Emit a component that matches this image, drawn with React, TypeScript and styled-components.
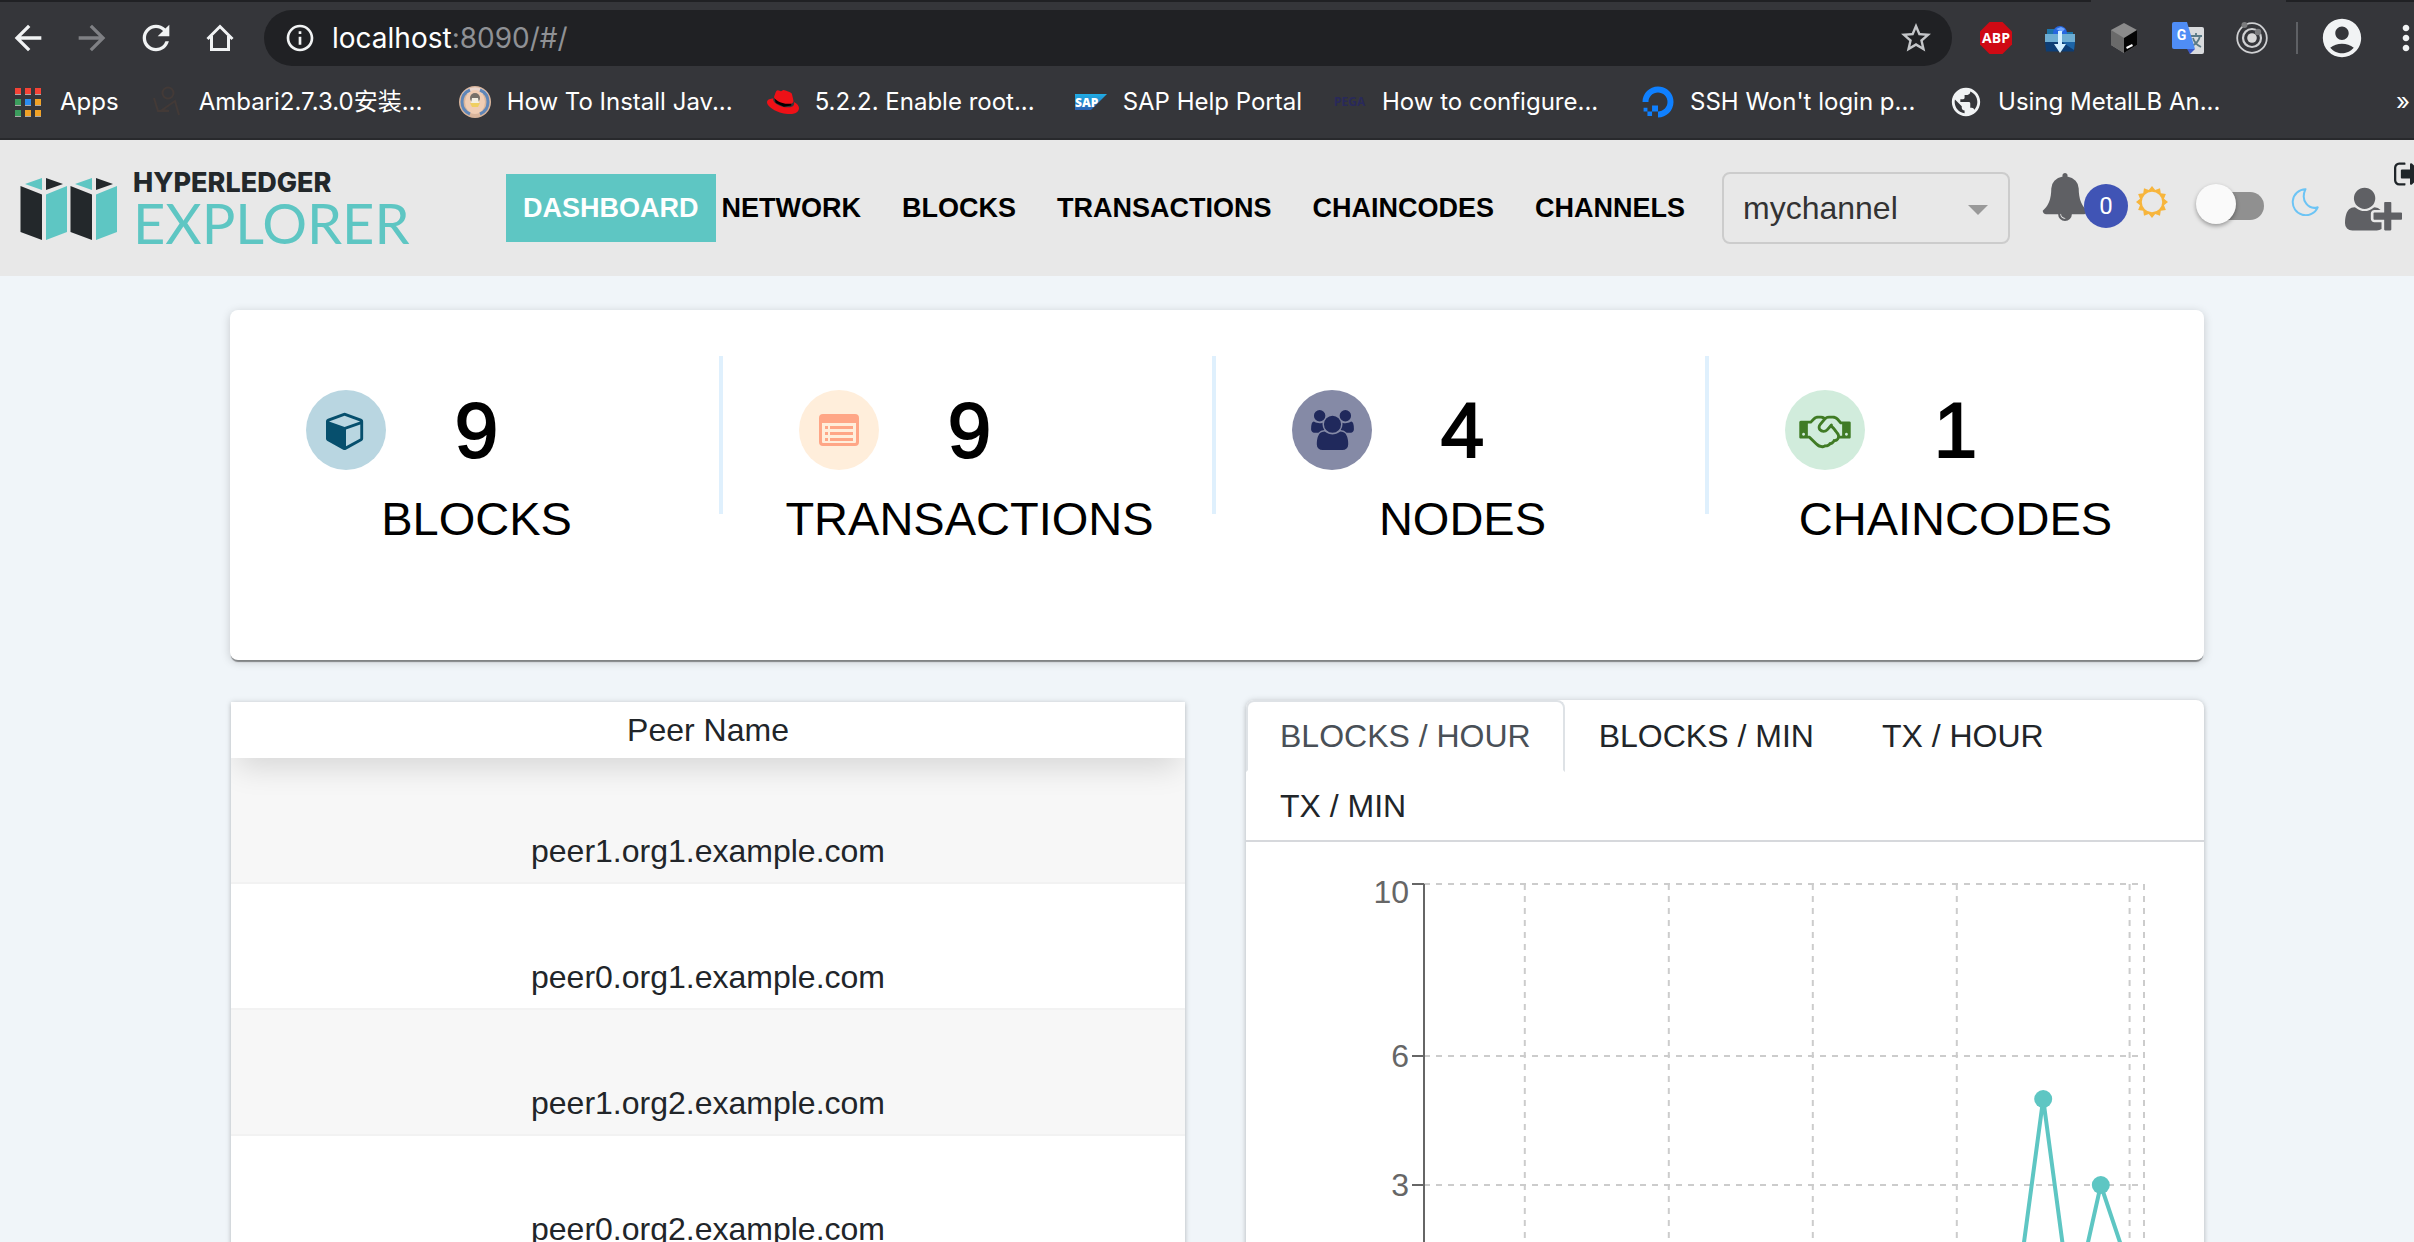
import React, { useState } from "react";
import styled, { createGlobalStyle } from "styled-components";
import {
  MdAccountCircle,
  MdArrowBack,
  MdArrowForward,
  MdInfoOutline,
  MdMoreVert,
  MdPublic,
  MdRefresh,
  MdStarBorder,
} from "react-icons/md";
import { FaDigitalOcean, FaRedhat } from "react-icons/fa";

const teal = "#5ec6c3";
const ink = "#212529";
const chrome = "#35363a";
const chromeDark = "#202124";
const uiFont = `Inter, "Noto Sans CJK SC", sans-serif`;

const GlobalStyle = createGlobalStyle`
  * { box-sizing: border-box; }
  html, body { margin: 0; height: 100%; overflow: hidden; }
  body {
    background: #f0f5f9;
    color: ${ink};
    font-family: "Liberation Sans", Arial, sans-serif;
    font-size: 32px;
  }
  button { font: inherit; color: inherit; background: none; border: 0; padding: 0; cursor: pointer; }
  a { color: inherit; text-decoration: none; }
  svg { display: block; flex: none; }
`;

const Page = styled.div`
  height: 100vh;
  display: flex;
  flex-direction: column;
  overflow: hidden;
`;

/* ---------- browser frame ---------- */

const Browser = styled.div`
  flex: none;
  background: ${chrome};
  border-bottom: 2px solid #28292c;
  font-family: ${uiFont};
  color: #fff;
`;

const TabStrip = styled.div`
  display: flex;
  justify-content: space-between;
  height: 2px;
`;

const TabEdge = styled.div<{ $basis: string }>`
  flex: 0 0 ${(p) => p.$basis};
  background: ${chromeDark};
`;

const Toolbar = styled.div`
  display: flex;
  align-items: center;
  height: 72px;
  padding: 0 0 0 8px;
  overflow: hidden;
`;

const NavButtons = styled.div`
  display: flex;
  gap: 24px;
  width: 256px;
`;

const IconButton = styled.button<{ $color?: string; $width?: number }>`
  display: flex;
  align-items: center;
  justify-content: center;
  flex: none;
  width: ${(p) => p.$width ?? 40}px;
  height: 40px;
  color: ${(p) => p.$color ?? "#f1f3f4"};
`;

const AddressBar = styled.div`
  flex: 1;
  display: flex;
  align-items: center;
  height: 56px;
  padding: 0 16px 0 20px;
  border-radius: 28px;
  background: ${chromeDark};
`;

const Address = styled.div`
  flex: 1;
  padding-left: 16px;
  font-size: 28px;
  line-height: 36px;
  color: #fff;
`;

const Muted = styled.span`
  color: #8f9195;
`;

const Extensions = styled.div`
  display: flex;
  align-items: center;
  gap: 32px;
  padding-left: 28px;
`;

const Separator = styled.div`
  width: 2px;
  height: 32px;
  margin: 0 21px 0 28px;
  background: #5f6165;
`;

const MenuSlot = styled.div`
  display: flex;
  align-items: center;
  gap: 33px;
`;

const BookmarkBar = styled.div`
  display: flex;
  align-items: center;
  gap: 32px;
  height: 64px;
  padding: 0 4px 8px 12px;
`;

const Bookmark = styled.a<{ $long?: boolean }>`
  display: flex;
  align-items: center;
  gap: 16px;
  flex: none;
  width: ${(p) => (p.$long ? "276px" : "auto")};
  font-size: 24px;
  line-height: 32px;
  white-space: nowrap;
`;

const Favicon = styled.span`
  display: flex;
  align-items: center;
  justify-content: center;
  flex: none;
  width: 32px;
  height: 32px;
`;

const AppsGrid = styled.span`
  display: grid;
  grid-template-columns: repeat(3, 6px);
  gap: 4px;
`;

const AppsCell = styled.span<{ $color: string }>`
  height: 7px;
  background: ${(p) => p.$color};
  border-bottom: 1px solid #a9a9a9;
`;

const Overflow = styled.button`
  margin-left: auto;
  font-size: 24px;
  line-height: 32px;
`;

/* ---------- explorer header ---------- */

const Header = styled.header`
  flex: none;
  display: flex;
  align-items: center;
  height: 136px;
  padding-left: 20px;
  background: #e8e8e8;
  overflow: hidden;
`;

const Logo = styled.a`
  display: flex;
  align-items: center;
  gap: 13px;
  flex: none;
  width: 486px;
`;

const LogoText = styled.span`
  display: flex;
  flex-direction: column;
`;

const LogoTop = styled.span`
  font-family: Inter, sans-serif;
  font-size: 27px;
  font-weight: 800;
  line-height: 30px;
  color: #23282b;
`;

const LogoBottom = styled.span`
  font-family: Lato, sans-serif;
  font-size: 56px;
  line-height: 50px;
  color: ${teal};
`;

const MainNav = styled.nav`
  display: flex;
  align-items: center;
  gap: 41px;
  flex: none;
`;

const NavLink = styled.a<{ $active?: boolean }>`
  font-size: 27px;
  font-weight: 700;
  line-height: 36px;
  color: ${(p) => (p.$active ? "#fff" : "#000")};
  background: ${(p) => (p.$active ? teal : "none")};
  padding: ${(p) => (p.$active ? "16px 17px" : "0")};
  margin-right: ${(p) => (p.$active ? "-35px" : "0")};
`;

const SelectWrap = styled.label`
  display: grid;
  align-items: center;
  flex: none;
  margin-left: 37px;
`;

const ChannelSelect = styled.select`
  grid-area: 1 / 1;
  appearance: none;
  width: 288px;
  height: 72px;
  padding: 0 56px 0 19px;
  border: 2px solid #ccc;
  border-radius: 8px;
  background: transparent;
  color: #333;
  font: 32px "Liberation Sans", Arial, sans-serif;
`;

const Caret = styled.span`
  grid-area: 1 / 1;
  justify-self: end;
  margin-right: 22px;
  margin-top: 4px;
  border: 10px solid transparent;
  border-top-color: #999;
  border-bottom: 0;
  pointer-events: none;
`;

const Tools = styled.div`
  display: flex;
  align-items: center;
  align-self: stretch;
  flex: none;
  padding: 0 0 8px 31px;
`;

const BellButton = styled.button`
  display: flex;
  align-items: center;
  color: #5f6064;
`;

const BellGlyph = styled.span`
  margin-bottom: 14px;
`;

const Badge = styled.span`
  margin-left: -5px;
  margin-top: 4px;
  z-index: 1;
  width: 44px;
  height: 44px;
  border-radius: 50%;
  background: #4054b5;
  color: #fff;
  font: 24px/44px Roboto, sans-serif;
  text-align: center;
`;

const ThemeRow = styled.label`
  display: flex;
  align-items: center;
  margin: 0 0 4px 8px;
`;

const Toggle = styled.input`
  appearance: none;
  position: relative;
  width: 68px;
  height: 40px;
  margin: 4px 27px 0 28px;
  cursor: pointer;

  &::before {
    content: "";
    position: absolute;
    inset: 8px 0 4px 4px;
    border-radius: 14px;
    background: #909090;
  }
  &::after {
    content: "";
    position: absolute;
    top: 0;
    left: 0;
    width: 40px;
    height: 40px;
    border-radius: 50%;
    background: #fafafa;
    box-shadow: 0 2px 4px rgba(0, 0, 0, 0.35);
  }
  &:checked::after {
    left: 28px;
  }
`;

const UserButton = styled.button`
  margin: 10px 0 0 26px;
  color: #5f6064;
`;

const LogoutButton = styled.button`
  align-self: flex-start;
  margin: 18px 0 0 -8px;
  color: #1f2529;
`;

/* ---------- dashboard ---------- */

const Main = styled.main`
  flex: none;
  padding: 34px 210px 40px 230px;
  display: flex;
  flex-direction: column;
  gap: 40px;
`;

const cardShadow = "0 0 6px rgba(0, 0, 0, 0.14), 0 2px 4px rgba(0, 0, 0, 0.14)";

const StatsCard = styled.section`
  display: grid;
  grid-template-columns: repeat(4, 1fr);
  min-height: 350px;
  padding: 46px 2px 0 0;
  border-radius: 8px;
  background: #fff;
  box-shadow: 0 3px 1px -1px rgba(0, 0, 0, 0.4), 0 2px 10px rgba(0, 0, 0, 0.18);
`;

const Stat = styled.div`
  display: flex;
  align-items: flex-start;
`;

const StatBody = styled.div`
  flex: 1;
  padding: 34px 0 0 4px;
`;

const StatRow = styled.div`
  display: grid;
  grid-template-columns: 1fr auto 1fr;
  align-items: center;
  height: 80px;
  margin-bottom: 21px;
`;

const StatIcon = styled.span<{ $bg: string; $fg: string }>`
  display: flex;
  align-items: center;
  justify-content: center;
  width: 80px;
  height: 80px;
  margin-left: 72px;
  border-radius: 50%;
  background: ${(p) => p.$bg};
  color: ${(p) => p.$fg};
`;

const StatNumber = styled.span`
  font-size: 78px;
  line-height: 80px;
  color: #000;
  -webkit-text-stroke: 2px #000;
`;

const StatLabel = styled.h2`
  margin: 0;
  font-size: 47px;
  font-weight: 400;
  line-height: 56px;
  text-align: center;
  color: #000;
`;

const StatDivider = styled.div<{ $hidden: boolean }>`
  width: 4px;
  height: 158px;
  background: ${(p) => (p.$hidden ? "transparent" : "#dff0fd")};
`;

const Columns = styled.div`
  display: grid;
  grid-template-columns: 955fr 958fr;
  align-items: start;
  gap: 61px;
`;

const PeerPanel = styled.section`
  padding: 2px 0 0 1px;
`;

const PeerTable = styled.table`
  width: 100%;
  border-collapse: separate;
  border-spacing: 0;
  background: #fff;
  box-shadow: ${cardShadow};
  text-align: center;
`;

const PeerHead = styled.th`
  position: relative;
  height: 56px;
  padding: 0;
  background: #fff;
  font-weight: 400;
  line-height: 36px;
  box-shadow: 0 16px 30px -6px rgba(0, 0, 0, 0.13);
  clip-path: inset(0 0 -48px 0);
`;

const PeerRow = styled.tr`
  &:nth-child(odd) {
    background: #f7f7f7;
  }
`;

const PeerCell = styled.td`
  height: 126px;
  padding: 0 0 13px;
  border-bottom: 2px solid #f2f2f2;
  line-height: 36px;
  vertical-align: bottom;
`;

const ChartCard = styled.section`
  border-radius: 8px;
  background: #fff;
  box-shadow: ${cardShadow};
`;

const Tabs = styled.div`
  display: flex;
  flex-wrap: wrap;
  border-bottom: 2px solid #d6d8dc;
`;

const Tab = styled.button<{ $active: boolean; $last: boolean }>`
  padding: 16px 32px;
  line-height: 36px;
  margin-bottom: -2px;
  border: 2px solid transparent;
  border-radius: 8px 8px 0 0;
  ${(p) =>
    p.$active &&
    `
    color: #495057;
    border-color: #dee2e6 #dee2e6 ${p.$last ? "#fff" : "transparent"};
  `}
`;

const ChartArea = styled.div`
  padding-top: 16px;
`;

const ChartSvg = styled.svg`
  width: 100%;
  height: auto;
  font-family: "Liberation Sans", Arial, sans-serif;
`;

/* ---------- icons ---------- */

const Glyph = ({ d, box, width, height }: { d: string; box: string; width: number; height: number }) => (
  <svg viewBox={box} width={width} height={height} fill="currentColor" aria-hidden="true">
    <path d={d} />
  </svg>
);

const cubePath =
  "M896 1629l640-349v-636l-640 233v752zm-64-865l698-254-698-254-698 254zm832-252v768q0 35-18 65t-49 47l-704 384q-28 16-61 16t-61-16l-704-384q-31-17-49-47t-18-65v-768q0-40 23-73t61-47l704-256q22-8 44-8t44 8l704 256q38 14 61 47t23 73z";
const usersPath =
  "M593 896q-162 5-265 128h-134q-82 0-138-40.5t-56-118.5q0-353 124-353 6 0 43.5 21t97.5 42.5 119 21.5q67 0 133-23-5 37-5 66 0 139 81 256zm1071 637q0 120-73 189.5t-194 69.5h-874q-121 0-194-69.5t-73-189.5q0-53 3.5-103.5t14-109 26.5-108.5 43-97.5 62-81 85.5-53.5 111.5-20q10 0 43 21.5t73 48 107 48 135 21.5 135-21.5 107-48 73-48 43-21.5q61 0 111.5 20t85.5 53.5 62 81 43 97.5 26.5 108.5 14 109 3.5 103.5zm-1024-1277q0 106-75 181t-181 75-181-75-75-181 75-181 181-75 181 75 75 181zm704 384q0 159-112.5 271.5t-271.5 112.5-271.5-112.5-112.5-271.5 112.5-271.5 271.5-112.5 271.5 112.5 112.5 271.5zm576 225q0 78-56 118.5t-138 40.5h-134q-103-123-265-128 81-117 81-256 0-29-5-66 66 23 133 23 59 0 119-21.5t97.5-42.5 43.5-21q124 0 124 353zm-128-609q0 106-75 181t-181 75-181-75-75-181 75-181 181-75 181 75 75 181z";
const handshakePath =
  "M192 1152q40 0 56-32t0-64-56-32-56 32 0 64 56 32zm1473-58q-10-13-38.5-50t-41.5-54-38-49-42.5-53-40.5-47-45-49l-125 140q-83 94-208.5 92t-205.5-98q-57-69-56.5-158t58.5-157l177-206q-22-11-51-16.5t-47.5-6-56.5.5-49 1q-92 0-158 66l-158 158h-155v544q5 0 21-.5t22 0 19.5 2 20.5 4.5 17.5 8.5 18.5 13.5l297 292q115 111 227 111 78 0 125-47 57 20 112.5-8t72.5-85q74 6 127-44 20-18 36-45.5t14-50.5q10 10 43 10 43 0 77-21t49.5-53 12-71.5-30.5-73.5zm159 58h96v-512h-93l-157-180q-66-76-169-76h-167q-89 0-146 67l-209 243q-28 33-28 75t27 75q43 51 110 52t111-49l193-218q25-23 53.5-21.5t47 27 8.5 56.5q16 19 56 63t60 68q29 36 82.5 105.5t64.5 84.5q52 66 60 140zm288 0q40 0 56-32t0-64-56-32-56 32 0 64 56 32zm192-576v640q0 26-19 45t-45 19h-434q-27 65-82 106.5t-125 51.5q-33 48-80.5 81.5t-102.5 45.5q-42 53-104.5 81.5t-128.5 24.5q-60 34-126 39.5t-127.5-14-117-53.5-103.5-81l-287-282h-358q-26 0-45-19t-19-45v-672q0-26 19-45t45-19h421q14-14 47-48t47.5-48 44-40 50.5-37.5 51-25.5 62-19.5 68-5.5h117q99 0 181 56 82-56 181-56h167q35 0 67 6t56.5 14.5 51.5 26.5 44.5 31 43 39.5 39 42 41 48 41.5 48.5h355q26 0 45 19t19 45z";
const bellPath =
  "M912 1696q0-16-16-16-59 0-101.5-42.5t-42.5-101.5q0-16-16-16t-16 16q0 73 51.5 124.5t124.5 51.5q16 0 16-16zm816-288q0 52-38 90t-90 38h-448q0 106-75 181t-181 75-181-75-75-181h-448q-52 0-90-38t-38-90q50-42 91-88t85-119.5 74.5-158.5 50-206 19.5-260q0-152 117-282.5t307-158.5q-8-19-8-39 0-40 28-68t68-28 68 28 28 68q0 20-8 39 190 28 307 158.5t117 282.5q0 139 19.5 260t50 206 74.5 158.5 85 119.5 91 88z";
const userPlusPath =
  "M704 896q-159 0-271.5-112.5t-112.5-271.5 112.5-271.5 271.5-112.5 271.5 112.5 112.5 271.5-112.5 271.5-271.5 112.5zm960 128h352q13 0 22.5 9.5t9.5 22.5v192q0 13-9.5 22.5t-22.5 9.5h-352v352q0 13-9.5 22.5t-22.5 9.5h-192q-13 0-22.5-9.5t-9.5-22.5v-352h-352q-13 0-22.5-9.5t-9.5-22.5v-192q0-13 9.5-22.5t22.5-9.5h352v-352q0-13 9.5-22.5t22.5-9.5h192q13 0 22.5 9.5t9.5 22.5v352zm-736 224q0 52 38 90t90 38h256v238q-68 50-171 50h-874q-121 0-194-69t-73-190q0-53 3.5-103.5t14-109 26.5-108.5 43-97.5 62-81 85.5-53.5 111.5-20q19 0 39 17 79 61 154.5 91.5t164.5 30.5 164.5-30.5 154.5-91.5q20-17 39-17 132 0 217 96h-223q-52 0-90 38t-38 90v192z";
const signOutPath =
  "M640 1440q0 4 1 20t.5 26.5-3 23.5-10 19.5-20.5 6.5h-320q-119 0-203.5-84.5t-84.5-203.5v-704q0-119 84.5-203.5t203.5-84.5h320q13 0 22.5 9.5t9.5 22.5q0 4 1 20t.5 26.5-3 23.5-10 19.5-20.5 6.5h-320q-66 0-113 47t-47 113v704q0 66 47 113t113 47h312l11.5 1 11.5 3 8 5.5 7 9 2 13.5zm928-544q0 26-19 45l-544 544q-19 19-45 19t-45-19-19-45v-288h-448q-26 0-45-19t-19-45v-384q0-26 19-45t45-19h448v-288q0-26 19-45t45-19 45 19l544 544q19 19 19 45z";

const ListIcon = () => (
  <svg viewBox="0 0 40 34" width="40" height="34" fill="currentColor" aria-hidden="true">
    <path
      fillRule="evenodd"
      d="M4 1h32a4 4 0 0 1 4 4v24a4 4 0 0 1-4 4H4a4 4 0 0 1-4-4V5a4 4 0 0 1 4-4zM3 10v19a1 1 0 0 0 1 1h32a1 1 0 0 0 1-1V10z"
    />
    <path d="M6 13h3v3H6zM11 13h23v3H11zM6 19h3v3H6zM11 19h23v3H11zM6 25h3v3H6zM11 25h23v3H11z" />
  </svg>
);

const HomeIcon = () => (
  <svg viewBox="0 0 32 32" width="32" height="32" fill="none" stroke="currentColor" strokeWidth="3" aria-hidden="true">
    <path d="M3.500 17 16 4.500 28.500 17M7.500 14v13.500h17V14" />
  </svg>
);

const SunIcon = () => {
  const points = Array.from({ length: 24 }, (_, i) => {
    const r = i % 2 ? 12.4 : 16;
    const a = (i * Math.PI) / 12 - Math.PI / 2;
    return `${16 + r * Math.cos(a)},${16 + r * Math.sin(a)}`;
  }).join("L");
  return (
    <svg viewBox="0 0 32 32" width="32" height="32" fill="#f7b53c" aria-hidden="true">
      <path fillRule="evenodd" d={`M${points}ZM16 5.800a10.200 10.200 0 1 0 0 20.400 10.200 10.200 0 0 0 0-20.400z`} />
    </svg>
  );
};

const MoonIcon = () => (
  <svg viewBox="0 0 28 28" width="28" height="28" fill="none" stroke="#6cc4f5" strokeWidth="2" strokeLinejoin="round" aria-hidden="true">
    <path d="M14.500 1.200A13 13 0 1 0 26.700 19.300C18 22 9 13 14.500 1.200z" />
  </svg>
);

const LogoMark = () => (
  <svg viewBox="0 0 100 66" width="100" height="66" aria-hidden="true">
    {[0, 50].map((x) => (
      <g key={x} transform={`translate(${x} 0)`}>
        <path fill="#23282b" d="M.500 11 22 19.500V65L.500 57zM26 3l17 6-17 6z" />
        <path fill={teal} d="M26 19.500 47 11v46l-21 8zM22 3v12L5 9z" />
      </g>
    ))}
  </svg>
);

const AbpIcon = () => (
  <svg viewBox="0 0 32 32" width="32" height="32" aria-hidden="true">
    <path fill="#cf0a14" d="M9.500 0h13L32 9.500v13L22.500 32h-13L0 22.500v-13z" />
    <text x="16" y="21" textAnchor="middle" fill="#fff" fontFamily="Open Sans, sans-serif" fontWeight="700" fontSize="14">
      ABP
    </text>
  </svg>
);

const FolderIcon = () => (
  <svg viewBox="0 0 32 32" width="32" height="32" aria-hidden="true">
    <path fill="#1c74a8" d="M3 7h7l2 3h17v8H3z" />
    <circle cx="16" cy="11" r="7" fill="#2667e0" />
    <path fill="#6fa4ff" d="M12 7l5-2 4 2-3 3z" />
    <path fill="#6eaed3" d="M1 12h30v8H1z" />
    <path fill="#0d3d74" d="M1 20h30l-1 9.500H2z" />
    <path fill="#1d64a6" d="M18 20h13l-1 8z" />
    <path fill="#d3efff" d="M14 9h4v13h4l-6 9-6-9h4z" />
  </svg>
);

const CubeIcon = () => (
  <svg viewBox="0 0 32 32" width="32" height="32" aria-hidden="true">
    <path fill="#8b8b8b" d="M16 1l13 7v15l-13 8-13-8V8z" />
    <path fill="#6a6a6a" d="M3 8l13 8v15L3 23z" />
    <path fill="#050505" d="M16 16l13-8v15l-13 8z" />
    <path stroke="#fff" strokeWidth="2" d="M18.500 26l6-3" />
  </svg>
);

const TranslateIcon = () => (
  <svg viewBox="0 0 32 32" width="32" height="32" aria-hidden="true">
    <path fill="#d9dbdd" d="M12 5h18a2 2 0 0 1 2 2v23a2 2 0 0 1-2 2H18z" />
    <path fill="none" stroke="#5a7a86" strokeWidth="1.800" d="M18 14h12M24 11v3M28 14c-1 4-4 8-8 10M21 16c1 4 4 7 8 9" />
    <path fill="#3b57c4" d="M15 27h8l-5 5z" />
    <path fill="#4f8df5" d="M2 0h13l8 27H2a2 2 0 0 1-2-2V2a2 2 0 0 1 2-2z" />
    <text x="9.500" y="18" textAnchor="middle" fill="#fff" fontFamily="Roboto, sans-serif" fontWeight="700" fontSize="14">
      G
    </text>
  </svg>
);

const OrbitIcon = () => (
  <svg viewBox="0 0 32 32" width="32" height="32" fill="none" stroke="#cfd0d2" aria-hidden="true">
    <circle cx="16" cy="16" r="14.800" strokeWidth="1.800" />
    <circle cx="16" cy="16" r="9" strokeWidth="2.200" />
    <circle cx="16" cy="16" r="4.800" fill="#d8d8d8" stroke="none" />
    <circle cx="8.500" cy="3" r="3" fill="#7b7c7e" stroke="none" />
    <circle cx="22" cy="10" r="3.200" fill="#7b7c7e" stroke="none" />
  </svg>
);

const FigureIcon = () => (
  <svg viewBox="0 0 32 32" width="32" height="32" fill="none" stroke="#433a37" strokeWidth="2" aria-hidden="true">
    <circle cx="17" cy="7" r="5.500" />
    <path d="M3 12l4 13h11l-7-1 13-9 4 14" />
  </svg>
);

const BadgeIcon = () => (
  <svg viewBox="0 0 32 32" width="32" height="32" aria-hidden="true">
    <circle cx="16" cy="16" r="16" fill="#d9b59c" />
    <path fill="#e9d5cc" d="M3 8a16 16 0 0 1 26 0z" />
    <ellipse cx="16" cy="16" rx="10" ry="12" fill="#f0cdb4" />
    <path fill="none" stroke="#5f86b8" strokeWidth="3" d="M11 4a13 13 0 0 0 0 24M21 4a13 13 0 0 1 0 24" />
    <ellipse cx="16" cy="12" rx="5" ry="5" fill="#77716a" />
    <path fill="#f3efe2" d="M13 12h6l1 5h-8z" />
    <path fill="#efcf62" d="M11 17h10l-2 4h-6z" />
  </svg>
);

const SapIcon = () => (
  <svg viewBox="0 0 32 16" width="32" height="16" aria-hidden="true">
    <defs>
      <linearGradient id="sap" x1="0" y1="0" x2="0" y2="1">
        <stop offset="0" stopColor="#20aee5" />
        <stop offset="1" stopColor="#2b62b4" />
      </linearGradient>
    </defs>
    <path fill="url(#sap)" d="M0 0h32L16 16H0z" />
    <text x="0" y="12.500" fill="#fff" fontFamily="Open Sans, sans-serif" fontWeight="800" fontSize="12">
      SAP
    </text>
  </svg>
);

const HatIcon = () => (
  <svg viewBox="0 0 512 512" width="32" height="32" aria-hidden="true">
    <path fill="#000" d="M120 200l20 70 130 60 120-20-10-80z" />
    <FaRedhat size={512} color="#ee1117" />
  </svg>
);

const PegaIcon = () => (
  <svg viewBox="0 0 32 20" width="32" height="20" aria-hidden="true">
    <text x="0" y="14" fill="#29295a" fontFamily="Open Sans, sans-serif" fontWeight="700" fontSize="12">
      PEGA
    </text>
  </svg>
);

/* ---------- data ---------- */

const appColors = ["#f44336", "#f44336", "#f44336", "#3c9d5d", "#2a8cf0", "#f0a227", "#3c9d5d", "#f0a227", "#f0a227"];

const bookmarks = [
  { title: "Ambari2.7.3.0安装...", icon: <FigureIcon />, long: true },
  { title: "How To Install Jav...", icon: <BadgeIcon />, long: true },
  { title: "5.2.2. Enable root...", icon: <HatIcon />, long: true },
  { title: "SAP Help Portal", icon: <SapIcon />, long: false },
  { title: "How to configure...", icon: <PegaIcon />, long: true },
  { title: "SSH Won't login p...", icon: <FaDigitalOcean size={32} color="#0f80ff" />, long: true },
  { title: "Using MetalLB An...", icon: <MdPublic size={34} color="#f1f3f4" />, long: true },
];

const sections = ["DASHBOARD", "NETWORK", "BLOCKS", "TRANSACTIONS", "CHAINCODES", "CHANNELS"];

const stats = [
  { label: "BLOCKS", value: 9, bg: "#b9d6e1", fg: "#064f6d", icon: <Glyph d={cubePath} box="0 0 1792 1792" width={40} height={40} /> },
  { label: "TRANSACTIONS", value: 9, bg: "#ffeedb", fg: "#ffa686", icon: <ListIcon /> },
  { label: "NODES", value: 4, bg: "#858aa6", fg: "#20295c", icon: <Glyph d={usersPath} box="0 0 1920 1792" width={43} height={40} /> },
  { label: "CHAINCODES", value: 1, bg: "#d1ecdc", fg: "#407b25", icon: <Glyph d={handshakePath} box="0 0 2304 1792" width={52} height={40} /> },
];

const peers = [
  "peer1.org1.example.com",
  "peer0.org1.example.com",
  "peer1.org2.example.com",
  "peer0.org2.example.com",
];

const tabs = ["BLOCKS / HOUR", "BLOCKS / MIN", "TX / HOUR", "TX / MIN"];

const hourly = Array.from({ length: 25 }, (_, i) => ({ 21: 5, 23: 3, 24: 1 })[i] ?? 0);

/* ---------- chart ---------- */

const plot = { left: 178, right: 898, top: 26, bottom: 456 };
const step = (plot.right - plot.left) / hourly.length;
const px = (i: number) => plot.left + step * (i + 0.5);
const py = (v: number) => plot.bottom - (v * (plot.bottom - plot.top)) / 10;

const Chart = () => (
  <ChartSvg viewBox="0 0 958 500" role="img" aria-label="Blocks per hour">
    <g stroke="#ccc" strokeWidth="2" strokeDasharray="6 6">
      {[10, 6, 3, 0].map((v) => (
        <line key={v} x1={plot.left} x2={plot.right} y1={py(v)} y2={py(v)} />
      ))}
      {[...[3, 8, 13, 18, 24].map(px), plot.right].map((x) => (
        <line key={x} x1={x} x2={x} y1={plot.top} y2={plot.bottom} />
      ))}
    </g>
    <g stroke="#666" strokeWidth="2">
      <line x1={plot.left} x2={plot.left} y1={plot.top} y2={plot.bottom} />
      <line x1={plot.left} x2={plot.right} y1={plot.bottom} y2={plot.bottom} />
      {[10, 6, 3, 0].map((v) => (
        <line key={v} x1={plot.left - 12} x2={plot.left} y1={py(v)} y2={py(v)} />
      ))}
    </g>
    <g fill="#666" fontSize="32" textAnchor="end">
      {[10, 6, 3, 0].map((v) => (
        <text key={v} x={plot.left - 15} y={py(v) + (v === 10 ? 19 : 11)}>
          {v}
        </text>
      ))}
    </g>
    <polyline
      fill="none"
      stroke={teal}
      strokeWidth="4"
      points={hourly.map((v, i) => `${px(i)},${py(v)}`).join(" ")}
    />
    {hourly.map((v, i) => (
      <circle key={i} cx={px(i)} cy={py(v)} r="9" fill={teal} />
    ))}
  </ChartSvg>
);

/* ---------- page ---------- */

export default function App() {
  const [tab, setTab] = useState(0);

  return (
    <Page>
      <GlobalStyle />
      <Browser>
        <TabStrip>
          <TabEdge $basis="86.6%" />
          <TabEdge $basis="5.3%" />
        </TabStrip>
        <Toolbar>
          <NavButtons>
            <IconButton aria-label="Back"><MdArrowBack size={40} /></IconButton>
            <IconButton aria-label="Forward" $color="#7f8084"><MdArrowForward size={40} /></IconButton>
            <IconButton aria-label="Reload"><MdRefresh size={40} /></IconButton>
            <IconButton aria-label="Home"><HomeIcon /></IconButton>
          </NavButtons>
          <AddressBar>
            <MdInfoOutline size={32} color="#f1f3f4" />
            <Address>
              localhost<Muted>:8090/#/</Muted>
            </Address>
            <IconButton aria-label="Bookmark this page" $color="#c4c6c9"><MdStarBorder size={36} /></IconButton>
          </AddressBar>
          <Extensions>
            <AbpIcon />
            <FolderIcon />
            <CubeIcon />
            <TranslateIcon />
            <OrbitIcon />
          </Extensions>
          <Separator />
          <MenuSlot>
            <IconButton aria-label="Profile" $width={46}><MdAccountCircle size={46} /></IconButton>
            <IconButton aria-label="Menu" $width={16}><MdMoreVert size={40} /></IconButton>
          </MenuSlot>
        </Toolbar>
        <BookmarkBar>
          <Bookmark href="#apps">
            <Favicon>
              <AppsGrid>
                {appColors.map((c, i) => (
                  <AppsCell key={i} $color={c} />
                ))}
              </AppsGrid>
            </Favicon>
            Apps
          </Bookmark>
          {bookmarks.map((b) => (
            <Bookmark key={b.title} href="#bookmark" $long={b.long}>
              <Favicon>{b.icon}</Favicon>
              {b.title}
            </Bookmark>
          ))}
          <Overflow aria-label="More bookmarks">»</Overflow>
        </BookmarkBar>
      </Browser>

      <Header>
        <Logo href="#/">
          <LogoMark />
          <LogoText>
            <LogoTop>HYPERLEDGER</LogoTop>
            <LogoBottom>EXPLORER</LogoBottom>
          </LogoText>
        </Logo>
        <MainNav>
          {sections.map((s, i) => (
            <NavLink key={s} href={`#/${s.toLowerCase()}`} $active={i === 0}>
              {s}
            </NavLink>
          ))}
        </MainNav>
        <SelectWrap>
          <ChannelSelect aria-label="Channel" defaultValue="mychannel">
            <option>mychannel</option>
          </ChannelSelect>
          <Caret />
        </SelectWrap>
        <Tools>
          <BellButton aria-label="Notifications">
            <BellGlyph>
              <Glyph d={bellPath} box="0 0 1792 1792" width={48} height={48} />
            </BellGlyph>
            <Badge>0</Badge>
          </BellButton>
          <ThemeRow>
            <SunIcon />
            <Toggle type="checkbox" aria-label="Dark theme" />
            <MoonIcon />
          </ThemeRow>
          <UserButton aria-label="Add user">
            <Glyph d={userPlusPath} box="0 0 2048 1792" width={57} height={50} />
          </UserButton>
          <LogoutButton aria-label="Sign out">
            <Glyph d={signOutPath} box="0 0 1792 1792" width={32} height={32} />
          </LogoutButton>
        </Tools>
      </Header>

      <Main>
        <StatsCard>
          {stats.map((s, i) => (
            <Stat key={s.label}>
              <StatBody>
                <StatRow>
                  <StatIcon $bg={s.bg} $fg={s.fg}>{s.icon}</StatIcon>
                  <StatNumber>{s.value}</StatNumber>
                </StatRow>
                <StatLabel>{s.label}</StatLabel>
              </StatBody>
              <StatDivider $hidden={i === stats.length - 1} />
            </Stat>
          ))}
        </StatsCard>

        <Columns>
          <PeerPanel>
            <PeerTable>
              <thead>
                <tr>
                  <PeerHead scope="col">Peer Name</PeerHead>
                </tr>
              </thead>
              <tbody>
                {peers.map((p) => (
                  <PeerRow key={p}>
                    <PeerCell>{p}</PeerCell>
                  </PeerRow>
                ))}
              </tbody>
            </PeerTable>
          </PeerPanel>

          <ChartCard>
            <Tabs role="tablist">
              {tabs.map((t, i) => (
                <Tab
                  key={t}
                  role="tab"
                  aria-selected={tab === i}
                  $active={tab === i}
                  $last={i === tabs.length - 1}
                  onClick={() => setTab(i)}
                >
                  {t}
                </Tab>
              ))}
            </Tabs>
            <ChartArea>
              <Chart />
            </ChartArea>
          </ChartCard>
        </Columns>
      </Main>
    </Page>
  );
}
